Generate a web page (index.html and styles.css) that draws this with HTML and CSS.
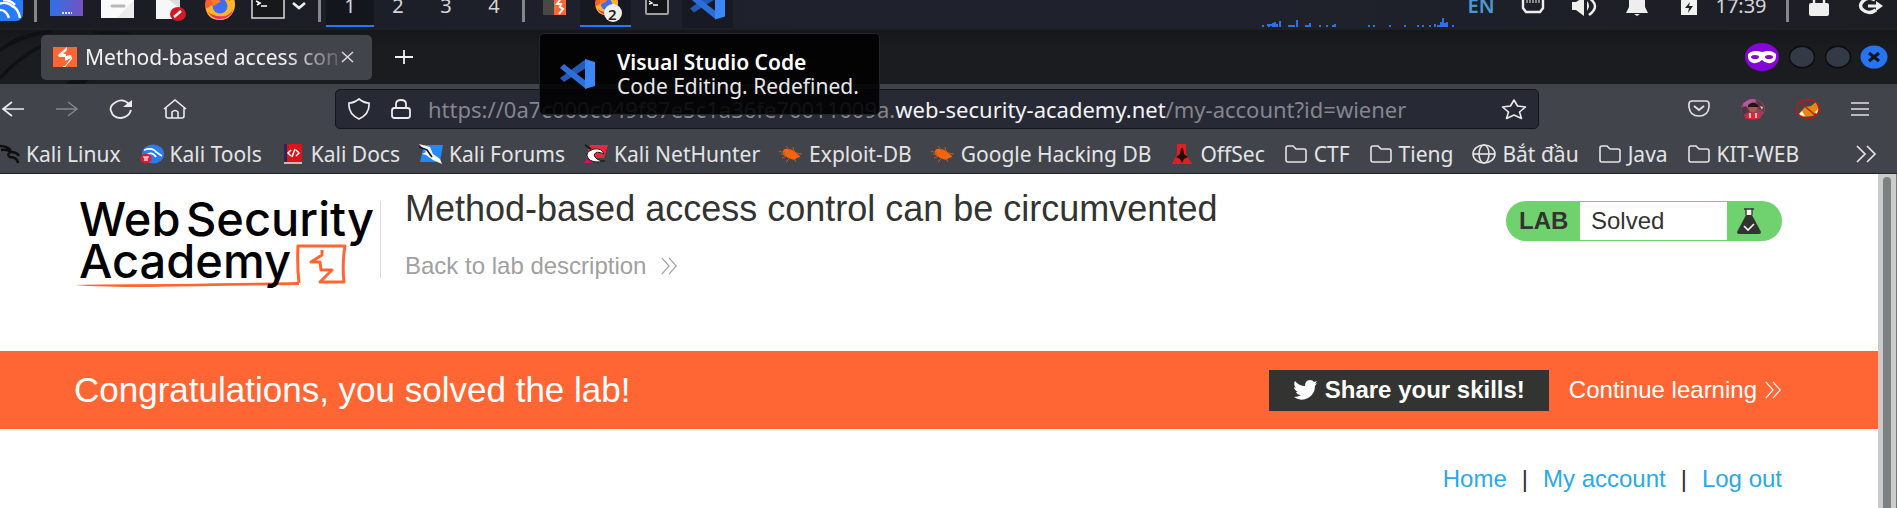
FILE: index.html
```html
<!DOCTYPE html>
<html lang="en">
<head>
<meta charset="utf-8">
<title>Method-based access control can be circumvented</title>
<link rel="stylesheet" href="styles.css">
</head>
<body>
<svg class="defs" width="0" height="0" aria-hidden="true">
  <defs>
    <symbol id="folder" viewBox="0 0 24 20"><path d="M2 16V4q0-2 2-2h5l3 3h8q2 0 2 2v9q0 2-2 2H4q-2 0-2-2z" fill="none" stroke="#e4e4e6" stroke-width="1.6"/></symbol>
    <symbol id="edb" viewBox="0 0 24 20"><path d="M4 7q1-3 6-2 6 1 8 5 3 1 3 3l-3 1q-2 3-6 1-6-2-8-5z" fill="#f26411"/><path d="M0 7l6 2M3 14l5-2M7 2l4 5M14 3l1 5M17 9l6 1M7 18l4-4M15 15l2 3M2 10l5 1" stroke="#c4571d" stroke-width="1"/></symbol>
    <symbol id="code" viewBox="0 0 36 30"><path d="M0 19l4 4 22-14V0z" fill="#2459b8"/><path d="M0 9l4-4 22 17v8z" fill="#2c6fd6"/><path d="M25 0l10 3v24l-10 3z" fill="#3c86f6"/></symbol>
    <symbol id="fox" viewBox="0 0 32 32"><ellipse cx="16" cy="16" rx="16" ry="16" fill="#ff5a35"/><path d="M1 20q2 12 15 12t16-16q0-8-5-12 2 6-1 8-4-6-9-9 0 5-2 8z" fill="#ffb62e"/><path d="M3 23q5 9 14 8 10-1 13-10-6 8-13 7-9 0-14-5z" fill="#ee3464"/><circle cx="16" cy="17" r="8" fill="#416cf0"/><path d="M6 10l6-1 5 3-6 4-3 1z" fill="#ff7a24"/></symbol>
    <symbol id="chevrons" viewBox="0 0 20 20"><path d="M2 1l8 9-8 9M10 1l8 9-8 9" fill="none" stroke="currentColor" stroke-width="1.3"/></symbol>
  </defs>
</svg>

<header class="panel">
  <button class="slot menu" aria-label="Applications"><svg width="36" height="30" viewBox="0 0 36 30"><rect x="-14" y="-20" width="37" height="41" rx="7" fill="#267cfc"/><path d="M-2 4q9-3 14 2 6 2 8 12M-2 10q8-1 11 8M3 0q8 0 12 5" fill="none" stroke="#fff" stroke-width="2.4"/></svg></button>
  <span class="sep"></span>
  <nav class="launchers" aria-label="Launchers">
    <button class="slot" aria-label="Desktop"><svg width="36" height="30" viewBox="0 0 36 30"><defs><linearGradient id="dg"><stop stop-color="#2f70e8"/><stop offset="1" stop-color="#7552bd"/></linearGradient></defs><path d="M1 0h33v16H1z" fill="url(#dg)"/><path d="M13 13h10" stroke="#e5e2f5" stroke-width="2" stroke-dasharray="2 1"/></svg></button>
    <button class="slot" aria-label="Files"><svg width="36" height="30" viewBox="0 0 36 30"><path d="M1 0h33v18H1z" fill="#fafafa"/><path d="M34 0v18H17z" fill="#ececec"/><path d="M12 6h12" stroke="#b8b8b8" stroke-width="3" stroke-linecap="round"/></svg></button>
    <button class="slot" aria-label="Text editor"><svg width="36" height="30" viewBox="0 0 36 30"><path d="M5 0h24v19H5z" fill="#f7f7f7"/><path d="M29 0v8L18 0z" fill="#dcdcdc"/><ellipse cx="27" cy="14" rx="8" ry="7" fill="#d31a21"/><path d="M23 17l7-6" stroke="#fff" stroke-width="2.4"/></svg></button>
    <button class="slot" aria-label="Firefox"><svg width="36" height="30" viewBox="0 0 36 30"><use href="#fox" x="2" y="-10" width="32" height="30"/></svg></button>
    <button class="slot narrow" aria-label="Terminal"><svg width="36" height="30" viewBox="0 0 36 30"><rect x="2" y="-8" width="32" height="26" fill="#16181a" stroke="#dadbdc" stroke-width="1.5"/><path d="M6 1l4 2-3 2M11 6h6" stroke="#fff" stroke-width="1.6" fill="none"/></svg></button>
    <button class="drop" aria-label="More"><svg width="16" height="30" viewBox="0 0 16 30"><path d="M2 3l6 5 6-5" fill="none" stroke="#eee" stroke-width="2.6"/></svg></button>
  </nav>
  <span class="sep spaced"></span>
  <nav class="spaces" aria-label="Workspaces">
    <button class="space active">1</button><button class="space">2</button><button class="space">3</button><button class="space">4</button>
  </nav>
  <span class="sep spaced"></span>
  <nav class="tasks" aria-label="Windows">
    <button class="slot" aria-label="Burp Suite"><svg width="26" height="30" viewBox="0 0 26 30"><path d="M1 0h12v15H1z" fill="#4a4747"/><path d="M12 0h12v15H12z" fill="#ff6633"/><path d="M18 0l-3 4h4l-1 3 3 2-4 5" fill="none" stroke="#fff" stroke-width="2"/></svg></button>
    <button class="slot current" aria-label="Firefox windows"><svg width="36" height="25" viewBox="0 0 36 25"><use href="#fox" x="7" y="-8" width="23" height="23"/><circle cx="25" cy="13" r="9" fill="#efefed"/></svg><span class="count">2</span></button>
    <button class="slot" aria-label="Terminal window"><svg width="26" height="30" viewBox="0 0 26 30"><rect x="2" y="-8" width="22" height="22" rx="1" fill="#141516" stroke="#9d9fa2" stroke-width="2"/><path d="M5 1l3 2-3 1M9 5h5" stroke="#fff" stroke-width="1.4" fill="none"/></svg></button>
    <button class="slot hovered" aria-label="Visual Studio Code"><svg width="36" height="30" viewBox="0 0 36 30"><use href="#code" x="0" y="-11" width="36" height="31"/></svg></button>
  </nav>
  <svg class="graph" width="196" height="30" viewBox="0 0 196 30"><path d="M3 26h2M8 25h2v2M12 26v-2M14 27v-4M16 27v-5M18 27v-3M21 27v-6M29 26h7M35 27v-2M38 27v-7M46 26h4M51 27v-4M60 26h2M67 26h2M73 26h2M76 27v-3M109 26h2M114 26h2M130 26h2M145 26h2M158 26h2M163 26h2M170 26h2M176 27v-3M178 26h3M182 27v-5M184 27v-9M186 27v-4M188 27v-5M193 26h2" stroke="#2873ec" stroke-width="2"/></svg>
  <div class="tray">
    <button class="slot lang">EN</button>
    <button class="slot" aria-label="Network"><svg width="26" height="30" viewBox="0 0 26 30"><path d="M3 0v8l3 4h14l3-4V0" fill="none" stroke="#eee" stroke-width="2.4"/><path d="M7 0v3M10 0v3M13 0v3M16 0v3M19 0v3" stroke="#eee"/></svg></button>
    <button class="slot" aria-label="Volume"><svg width="28" height="30" viewBox="0 0 28 30"><path d="M1 2h4l8-5v19l-8-6H1z" fill="#eee"/><path d="M16 1q4 4 0 10z" fill="#eee"/><path d="M18-2q12 8 0 17" fill="none" stroke="#eee" stroke-width="2.5"/></svg></button>
    <button class="slot" aria-label="Notifications"><svg width="26" height="30" viewBox="0 0 26 30"><path d="M5 0h16v7l3 6H2l3-6z" fill="#eee"/><path d="M10 14h6l-3 2z" fill="#eee"/></svg></button>
    <button class="slot" aria-label="Battery"><svg width="26" height="30" viewBox="0 0 26 30"><path d="M5-1h16v16H5z" fill="#f2f2f0"/><path d="M14 2l-5 6h4l-1 5 5-7h-4z" fill="#20222c"/></svg></button>
    <span class="slot clock">17:39</span>
    <span class="sep clocksep"></span>
    <button class="slot" aria-label="Lock screen"><svg width="26" height="30" viewBox="0 0 26 30"><rect x="3" y="3" width="20" height="13" rx="2" fill="#eee"/><path d="M8 4V0M18 4V0" stroke="#eee" stroke-width="2.4"/></svg></button>
    <button class="slot" aria-label="Log out"><svg width="28" height="30" viewBox="0 0 28 30"><path d="M18 0q-7-4-12 1t0 9q6 5 13 0" fill="none" stroke="#eee" stroke-width="3.4"/><path d="M11 6h9" stroke="#eee" stroke-width="3"/><path d="M19 1l7 5-7 5z" fill="#eee"/></svg></button>
  </div>
</header>

<section class="tabbar">
  <svg class="dragon" width="140" height="54" viewBox="0 0 140 54"><path d="M0 18Q20 2 50 0L54 2Q20 8 0 22zM0 46Q18 26 41 14V18Q22 28 0 50zM66 54q3-4 8-5h16l-5 5zM90 2l20-1 24 2-30 1z" fill="#101115"/></svg>
  <div class="tab">
    <svg width="24" height="20" viewBox="0 0 24 20"><path d="M0 0h24v20H0z" fill="#ff6633"/><path d="M14 0L5 8l1 2h6v4l6-3-6 8h-2v1h2l7-8-1-4-5 1V7h-3l4-4z" fill="#fff"/></svg>
    <span class="tabname">Method-based access con</span>
    <button class="tabclose" aria-label="Close tab"><svg width="14" height="12" viewBox="0 0 14 12"><path d="M1 1l11 10M12 1L1 11" stroke="#dcdcde" stroke-width="1.5"/></svg></button>
  </div>
  <button class="newtab" aria-label="New tab"><svg width="20" height="16" viewBox="0 0 20 16"><path d="M1 8h18M10 1v14" stroke="#f2f2f4" stroke-width="1.8"/></svg></button>
  <div class="window">
    <svg width="36" height="30" viewBox="0 0 36 30"><ellipse cx="18" cy="15" rx="17" ry="14" fill="#8405d8"/><path d="M4 12q5-5 14-2 9-3 14 2 1 7-5 9-5 1-9-3-4 4-9 3-6-2-5-9z" fill="#fff"/><ellipse cx="11" cy="15" rx="4" ry="2" fill="#8405d8"/><ellipse cx="25" cy="15" rx="4" ry="2" fill="#8405d8"/></svg>
    <button aria-label="Minimize"><svg width="28" height="24" viewBox="0 0 28 24"><ellipse cx="14" cy="12" rx="12.5" ry="10.7" fill="#343946" stroke="#0b0c0f" stroke-width="1.4"/></svg></button>
    <button aria-label="Maximize"><svg width="28" height="24" viewBox="0 0 28 24"><ellipse cx="14" cy="12" rx="12.5" ry="10.7" fill="#343946" stroke="#0b0c0f" stroke-width="1.4"/></svg></button>
    <button aria-label="Close"><svg width="28" height="24" viewBox="0 0 28 24"><ellipse cx="14" cy="12" rx="13.5" ry="11.5" fill="#2674f4"/><path d="M9 8l10 8M19 8L9 16" stroke="#11141b" stroke-width="3.2"/></svg></button>
  </div>
</section>

<section class="toolbar">
  <div class="nav">
    <button aria-label="Back"><svg width="24" height="20" viewBox="0 0 24 20"><path d="M23 10H2M11 3L2 10l9 7" fill="none" stroke="#ececee" stroke-width="1.7"/></svg></button>
    <button aria-label="Forward"><svg width="24" height="20" viewBox="0 0 24 20"><path d="M1 10h21M13 3l9 7-9 7" fill="none" stroke="#85868b" stroke-width="1.5"/></svg></button>
    <button aria-label="Reload"><svg width="24" height="20" viewBox="0 0 24 20"><path d="M20 5Q14-1 7 3T2 12q2 7 10 7 8-1 10-8" fill="none" stroke="#ececee" stroke-width="1.8"/><path d="M23 1v7h-9z" fill="#ececee"/></svg></button>
    <button aria-label="Home"><svg width="24" height="20" viewBox="0 0 24 20"><path d="M1 10L12 1l11 9M3 9v8q0 2 2 2h14q2 0 2-2V9M9 19v-6q3-3 6 0v6" fill="none" stroke="#ececee" stroke-width="1.6"/></svg></button>
  </div>
  <div class="urlbar">
    <svg width="24" height="22" viewBox="0 0 24 22"><path d="M12 1q5 4 10 4 1 11-10 16Q1 16 2 5q5 0 10-4z" fill="none" stroke="#ececee" stroke-width="1.7"/></svg>
    <svg class="padlock" width="22" height="22" viewBox="0 0 22 22"><rect x="2" y="10" width="18" height="10" rx="2.5" fill="none" stroke="#ececee" stroke-width="1.8"/><path d="M6 10V6q0-4 5-4t5 4v4" fill="none" stroke="#ececee" stroke-width="1.8"/></svg>
    <div class="url" role="textbox" aria-label="Address">https://0a7c000c049f87e5c1a36fe70011009a.<b>web-security-academy.net</b>/my-account?id=wiener</div>
    <button aria-label="Bookmark this page"><svg width="26" height="22" viewBox="0 0 26 22"><path d="M13 2l3.500 6 8 1-6 5 2 6.500L13 17l-7.500 3.500 2-6.500-6-5 8-1z" fill="none" stroke="#ececee" stroke-width="1.6" stroke-linejoin="round"/></svg></button>
  </div>
  <div class="addons">
    <button aria-label="Pocket"><svg width="24" height="20" viewBox="0 0 24 20"><path d="M2 5q0-3 3-3h14q3 0 3 3v3q-1 9-10 9T2 8z" fill="none" stroke="#e0e0e2" stroke-width="1.7"/><path d="M7 7l5 4 5-4" fill="none" stroke="#e0e0e2" stroke-width="2"/></svg></button>
    <button aria-label="Profile"><svg width="26" height="22" viewBox="0 0 26 22"><ellipse cx="13" cy="11" rx="12" ry="10" fill="#96405e"/><path d="M3 6q7-7 13-4l-3 5-9 3z" fill="#b45a9c"/><path d="M16 2q9 2 8 12l-6-3z" fill="#5d3845"/><path d="M1 10l5-2 3 6-6 3z" fill="#4a3540"/><ellipse cx="13" cy="10" rx="4" ry="4" fill="#a05f4e"/><path d="M8 7q5-5 10 0v2H8z" fill="#221417"/><path d="M5 20q1-7 7-5 8-2 9 5-8 3-16 0z" fill="#dd2639"/><path d="M9 15h2v5H9zM15 15h2v5h-2zM20 8l3 1-1 3z" fill="#e8b9c0"/></svg></button>
    <button aria-label="FoxyProxy"><svg width="26" height="22" viewBox="0 0 26 22"><path d="M3 17l7-8 6-1 5-4 3 8-6 6-10 1z" fill="#e38b10"/><path d="M3 17l4-4 3 5zM20 14l3-3-1 5z" fill="#f7f1df"/><ellipse cx="13" cy="11" rx="11.500" ry="9.500" fill="none" stroke="#bd1717" stroke-width="1.4"/><path d="M5 4l16 14" stroke="#bd1717" stroke-width="1.4"/></svg></button>
    <button aria-label="Menu"><svg width="20" height="18" viewBox="0 0 20 18"><path d="M1 3h18M1 9h18M1 15h18" stroke="#e0e0e2" stroke-width="1.6"/></svg></button>
  </div>
</section>

<nav class="bookmarks" aria-label="Bookmarks">
  <a href="#"><svg width="24" height="20" viewBox="0 0 24 20"><path d="M3 2q9 0 12 5M5 6q6-1 10 2 6 0 8 4M15 8q-5 2-1 5 7 0 8 6" fill="none" stroke="#0c0d0e" stroke-width="2.4"/></svg>Kali Linux</a>
  <a href="#"><svg width="24" height="20" viewBox="0 0 24 20"><ellipse cx="13" cy="10" rx="11" ry="9.500" fill="#2b7cf0"/><path d="M4 6q9-3 12 2l6 4M6 11q6-4 10 2" fill="none" stroke="#fff" stroke-width="1.7"/><ellipse cx="6" cy="14.500" rx="5.500" ry="5" fill="#e01b2d"/><path d="M3 13h6M5 13v4M7 13v4" stroke="#fff" stroke-width="1.2"/></svg>Kali Tools</a>
  <a href="#"><svg width="24" height="20" viewBox="0 0 24 20"><path d="M3 0h18v18H3z" fill="#d9141b"/><path d="M3 0h3v18H3z" fill="#292754"/><path d="M3 18h18v2H3z" fill="#c8b7bd"/><path d="M10 6L7 9l3 3M15 6l3 3-3 3M14 5l-3 8" fill="none" stroke="#fff" stroke-width="1.5"/></svg>Kali Docs</a>
  <a href="#"><svg width="24" height="20" viewBox="0 0 24 20"><path d="M5 1h19l-3 17H1z" fill="#2788f5"/><path d="M0 0l11 3 3 7 7 5 2 5-9-4-7-5-4-1 4-2z" fill="#f5f5f5"/><path d="M0 3l8 3 5 7" fill="none" stroke="#17191e" stroke-width="1.6"/></svg>Kali Forums</a>
  <a href="#"><svg width="24" height="20" viewBox="0 0 24 20"><path d="M6 1h18l-4 13H2z" fill="#f3243b"/><path d="M0 19l3-4 6 4z" fill="#d4145a"/><path d="M21 17Q8 20 4 14T10 5q8-1 10 5-8-4-10 1 2 6 11 6z" fill="#fff" stroke="#17191e"/><path d="M1 1l6 4" stroke="#17191e" stroke-width="2"/></svg>Kali NetHunter</a>
  <a href="#"><svg width="24" height="20"><use href="#edb"/></svg>Exploit-DB</a>
  <a href="#"><svg width="24" height="20"><use href="#edb"/></svg>Google Hacking DB</a>
  <a href="#"><svg width="24" height="20" viewBox="0 0 24 20"><path d="M7 0h9v10l6 10H2l5-10z" fill="#df2023"/><path d="M11 4h2l1 6 4 3-4 2-2 4-2-4-4-2 4-3z" fill="#250a0b"/></svg>OffSec</a>
  <a href="#"><svg width="24" height="20"><use href="#folder"/></svg>CTF</a>
  <a href="#"><svg width="24" height="20"><use href="#folder"/></svg>Tieng</a>
  <a href="#"><svg width="24" height="20" viewBox="0 0 24 20"><g fill="none" stroke="#e4e4e6" stroke-width="1.6"><ellipse cx="12" cy="10" rx="11" ry="9"/><ellipse cx="12" cy="10" rx="5" ry="9"/><path d="M1 10h22"/></g></svg>Bắt đầu</a>
  <a href="#"><svg width="24" height="20"><use href="#folder"/></svg>Java</a>
  <a href="#"><svg width="24" height="20"><use href="#folder"/></svg>KIT-WEB</a>
  <button class="overflow" aria-label="More bookmarks"><svg width="22" height="18" viewBox="0 0 22 18"><path d="M2 1l8 8-8 8M12 1l8 8-8 8" fill="none" stroke="#e4e4e6" stroke-width="1.7"/></svg></button>
</nav>

<aside class="tooltip" role="tooltip">
  <svg width="36" height="30"><use href="#code"/></svg>
  <div><strong>Visual Studio Code</strong><p>Code Editing. Redefined.</p></div>
</aside>

<div class="viewport">
  <main class="page">
    <section class="labhead">
      <svg class="logo" width="300" height="92" viewBox="0 0 300 92" role="img" aria-label="Web Security Academy">
        <path d="M0 85q30-1 100-1 70-1 124-2v3q-80 1-150 2-50 0-74-2z" fill="#ff6633"/>
        <path d="M224 83q-2-18-1-37l47 0q-3 18-1 36l-24 0 12-12-11 0-1-8-9 0 11-7 0-5" fill="none" stroke="#ff6633" stroke-width="3" stroke-linejoin="round"/>
        <text class="logotext" x="4" y="36">Web</text><text class="logotext" x="111" y="36">Security</text><text class="logotext" x="4" y="78">Academy</text>
      </svg>
      <div class="title">
        <h2>Method-based access control can be circumvented</h2>
        <a class="back" href="#">Back to lab description<svg width="18" height="18"><use href="#chevrons"/></svg></a>
      </div>
      <div class="status">
        <span class="lab">LAB</span><span class="solved">Solved</span>
        <svg width="26" height="28" viewBox="0 0 26 28"><path d="M10 2h6v7h-6z" fill="#f5f5f5"/><path d="M8 2h10M10 2v6M16 2v6" stroke="#333332" stroke-width="1.3"/><path d="M10 8h6l9 17q0 2-2 2H3q-2 0-2-2z" fill="#333332"/><path d="M8 19l4 4 6-6" fill="none" stroke="#f5f5f5" stroke-width="1.7"/></svg>
      </div>
    </section>
    <section class="banner">
      <h4>Congratulations, you solved the lab!</h4>
      <button class="share"><svg width="24" height="20" viewBox="0 0 24 20"><path d="M1 17q4 0 7-2-4 0-5-3h2Q1 10 1 7l2 1Q0 5 2 1q4 5 10 5 0-6 5-6 3 0 4 2l3-1-2 3 2-1-2 3q0 8-7 12-7 4-14-1z" fill="#fff"/></svg>Share your skills!</button>
      <a class="continue" href="#">Continue learning<svg width="18" height="18"><use href="#chevrons"/></svg></a>
    </section>
    <nav class="links" aria-label="Account">
      <a href="#">Home</a><span>|</span><a href="#">My account</a><span>|</span><a href="#">Log out</a>
    </nav>
  </main>
  <div class="scrollbar"><div class="thumb"></div></div>
</div>
</body>
</html>
```
FILE: styles.css
```css
* { box-sizing: border-box; }
body {
  margin: 0;
  height: 100vh;
  overflow: hidden;
  display: flex;
  flex-direction: column;
  position: relative;
  background: #fff;
  color: #333332;
  font-family: "Noto Sans", sans-serif;
}
svg { display: block; flex: none; }
.defs { position: absolute; }
button {
  border: 0;
  padding: 0;
  margin: 0;
  background: none;
  color: inherit;
  font: inherit;
}
a { text-decoration: none; color: inherit; }
h2, h4, p { margin: 0; font-weight: 400; }

.panel {
  flex: none;
  display: flex;
  align-items: flex-start;
  height: 30px;
  overflow: hidden;
  background: linear-gradient(90deg, #1b1c22, #1e212c 35%, #1f222d 60%, #1d1e24);
  border-bottom: 2px solid #1d1f23;
  color: #d4d5d8;
  font-size: 20px;
  line-height: 12px;
}
.slot {
  flex: none;
  width: 51px;
  height: 28px;
  display: flex;
  justify-content: center;
  align-items: flex-start;
}
.menu { width: 34px; justify-content: flex-start; }
.sep { flex: none; width: 3px; height: 22px; background: #85868a; }
.spaced { margin: 0 4px; }
.launchers { display: flex; margin-left: 4px; }
.narrow { width: 46px; }
.drop { width: 16px; }
.launchers + .spaced { margin-left: 11px; margin-right: 5px; }
.spaces, .tasks, .tray { display: flex; }
.space { width: 48px; height: 27px; padding-bottom: 15px; }
.active { background: #14161e; border-bottom: 2px solid #2777ff; padding-bottom: 13px; }
.current { position: relative; height: 27px; background: #171920; border-bottom: 2px solid #2777ff; }
.count { position: absolute; left: 28px; top: 8px; color: #222; font-size: 15px; font-weight: 600; }
.hovered { background: #181a23; }
.graph { margin-left: auto; }
.tray .slot { width: 52px; }
.tray .lang { color: #4a9bd5; font-weight: 600; }
.clocksep { margin: 0 4px 0 19px; }

.tabbar {
  flex: none;
  display: flex;
  align-items: center;
  height: 54px;
  padding: 0 9px 0 41px;
  position: relative;
  background: linear-gradient(#16171b, #1b1c20 40%);
}
.dragon { position: absolute; left: 0; top: 0; }
.tab {
  position: relative;
  display: flex;
  align-items: center;
  width: 331px;
  height: 45px;
  padding: 0 17px 0 12px;
  border-radius: 5px;
  background: #42444b;
  color: #f1f1f3;
  font-size: 21px;
}
.tabname {
  flex: 1;
  margin-left: 8px;
  overflow: hidden;
  white-space: nowrap;
  -webkit-mask-image: linear-gradient(90deg, #000 80%, rgba(0,0,0,.2));
  mask-image: linear-gradient(90deg, #000 80%, rgba(0,0,0,.2));
}
.tabclose { margin-left: 4px; }
.newtab { margin-left: 22px; }
.window { margin-left: auto; display: flex; align-items: center; gap: 8px; }

.toolbar {
  flex: none;
  display: flex;
  align-items: center;
  justify-content: space-between;
  height: 46px;
  padding: 4px 27px 0 1px;
  background: #42444b;
}
.nav { display: flex; gap: 30px; }
.urlbar {
  display: flex;
  align-items: center;
  flex: 1;
  margin: 0 148px;
  height: 40px;
  padding: 0 11px;
  border: 1px solid #14151b;
  border-radius: 5px;
  background: #272935;
}
.padlock { margin: 0 16px 0 19px; }
.url { flex: 1; white-space: nowrap; font-size: 22px; color: #85868e; }
.url b { font-weight: 400; color: #f3f3f5; }
.addons { display: flex; align-items: center; gap: 29px; }

.bookmarks {
  flex: none;
  display: flex;
  align-items: center;
  gap: 19px;
  height: 44px;
  padding: 4px 20px 0 0;
  background: #42444b;
  border-bottom: 1px solid #232428;
  color: #e4e4e6;
  font-size: 21px;
  white-space: nowrap;
}
.bookmarks a { display: flex; align-items: center; gap: 6px; }
.bookmarks a:first-child { margin-left: -4px; }
.overflow { margin-left: auto; }

.tooltip {
  position: absolute;
  left: 539px;
  top: 33px;
  display: flex;
  align-items: center;
  gap: 21px;
  height: 82px;
  padding: 0 20px;
  border: 1px solid #24252a;
  border-radius: 5px;
  background: rgba(0,0,0,.87);
  color: #e8e8ea;
  font-size: 21px;
  line-height: 24px;
  white-space: nowrap;
}
.tooltip strong { display: block; color: #fff; font-weight: 600; }

.viewport {
  flex: 1;
  min-height: 0;
  display: flex;
  font-family: "Liberation Sans", sans-serif;
  font-size: 24px;
}
.page { flex: 1; min-width: 0; }
.labhead { display: flex; align-items: flex-start; height: 177px; padding: 0 96px 0 75px; }
.logo { margin-top: 26px; }
.logotext { font: 500 47px Inter, sans-serif; fill: #000; }
.title {
  flex: 1;
  margin-top: 12px;
  padding-left: 30px;
  position: relative;
}
.title::before {
  content: "";
  position: absolute;
  left: 5px;
  top: 15px;
  width: 1px;
  height: 77px;
  background: #dcdcdc;
}
.title h2 { font-size: 36px; line-height: 46px; white-space: nowrap; }
.back { display: flex; align-items: center; gap: 14px; margin-top: 20px; line-height: 28px; color: #a0a0a0; }
.status {
  display: flex;
  align-items: center;
  width: 276px;
  height: 40px;
  margin-top: 27px;
  padding: 1px 20px 1px 13px;
  border-radius: 20px;
  background: #70d26e;
}
.lab { width: 61px; line-height: 40px; font-weight: 700; }
.solved {
  flex: 1;
  align-self: stretch;
  margin-right: 9px;
  padding-left: 11px;
  background: #fff;
  line-height: 38px;
}
.banner {
  display: flex;
  align-items: center;
  height: 78px;
  padding: 0 96px 0 74px;
  background: #ff6633;
  color: #fff;
}
.banner h4 { flex: 1; font-size: 35px; line-height: 40px; }
.share {
  display: flex;
  align-items: center;
  gap: 8px;
  height: 41px;
  padding: 0 24px;
  background: #333332;
  font-weight: 700;
}
.continue { display: flex; align-items: center; gap: 7px; margin-left: 20px; }
.links {
  display: flex;
  justify-content: flex-end;
  gap: 15px;
  padding: 35px 96px 0;
  line-height: 30px;
}
.links a { color: #29a9ea; }
.scrollbar { width: 19px; padding: 3px 5px 0; background: #cbcccc; border-right: 1px solid #777; }
.thumb { height: 100%; border-radius: 5px 5px 0 0; background: #7c8080; }
```
